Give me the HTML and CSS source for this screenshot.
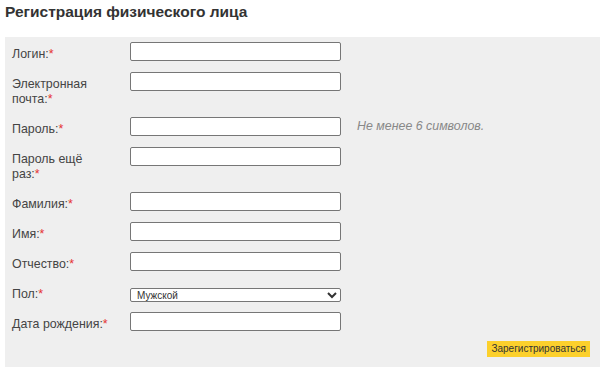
FILE: index.html
```html
<!DOCTYPE html>
<html lang="ru">
<head>
  <meta charset="UTF-8" />
  <meta name="viewport" content="width=device-width, initial-scale=1.0"/>
  <title>Регистрация физического лица</title>
  <link rel="stylesheet" href="styles.css">
</head>
<body>
  <h1>Регистрация физического лица</h1>

  <form class="reg-form">
    <label for="login">Логин:<span class="req">*</span></label>
    <input type="text" id="login" />
    <span></span>

    <label for="email">Электронная почта:<span class="req">*</span></label>
    <input type="text" id="email" />
    <span></span>

    <label for="pass">Пароль:<span class="req">*</span></label>
    <input type="password" id="pass" />
    <span class="hint">Не менее 6 символов.</span>

    <label for="pass2">Пароль ещё раз:<span class="req">*</span></label>
    <input type="password" id="pass2" />
    <span></span>

    <label for="lastname">Фамилия:<span class="req">*</span></label>
    <input type="text" id="lastname" />
    <span></span>

    <label for="firstname">Имя:<span class="req">*</span></label>
    <input type="text" id="firstname" />
    <span></span>

    <label for="middlename">Отчество:<span class="req">*</span></label>
    <input type="text" id="middlename" />
    <span></span>

    <label for="sex">Пол:<span class="req">*</span></label>
    <select id="sex">
      <option>Мужской</option>
      <option>Женский</option>
    </select>
    <span></span>

    <label for="birth">Дата рождения:<span class="req">*</span></label>
    <input type="text" id="birth" />
    <span></span>

    <div class="actions">
      <button type="button">Зарегистрироваться</button>
    </div>
  </form>
</body>
</html>
```

FILE: styles.css
```css
body {
  margin: 0 0 0 5px;
  font-family: 'Liberation Sans', Arial, sans-serif;
  color: #333;
  background: #fff;
  overflow: hidden;
}
h1 {
  font-size: 15.5px;
  line-height: 19px;
  margin: 2px 0 16px;
  color: #333;
}
.reg-form {
  display: grid;
  grid-template-columns: 118px 227px auto;
  row-gap: 10px;
  align-items: start;
  align-content: start;
  background: #efefef;
  padding: 5px 10px 20px 7px;
  min-height: 330px;
}
.reg-form label {
  display: block;
  width: 98px;
  font-size: 12.4px;
  line-height: 15px;
  padding-top: 5px;
  color: #444;
}
.req {
  color: #e53333;
}
.reg-form input {
  display: block;
  box-sizing: border-box;
  width: 211px;
  height: 19px;
  margin: 0;
  padding: 0 4px;
  border: 1px solid #767676;
  border-radius: 2px;
  background: #fff;
  font-size: 12px;
  line-height: 15px;
}
.reg-form select {
  display: block;
  box-sizing: border-box;
  width: 211px;
  height: 14px;
  margin: 6px 0 0;
  padding: 0 2px;
  border: 1px solid #767676;
  border-radius: 2px;
  background: #fff;
  font-family: 'Liberation Sans', Arial, sans-serif;
  font-size: 10px;
  line-height: 12px;
  color: #333;
}
.hint {
  font-size: 12.4px;
  line-height: 15px;
  padding-top: 2px;
  font-style: italic;
  color: #888;
}
.actions {
  grid-column: 1 / -1;
  display: flex;
  justify-content: flex-end;
}
.actions button {
  background: #fcd02c;
  border: none;
  color: #333;
  font-family: 'Liberation Sans', Arial, sans-serif;
  font-size: 10px;
  line-height: 12px;
  height: 16px;
  padding: 0 4px;
  margin-top: -1px;
  cursor: pointer;
}
```
